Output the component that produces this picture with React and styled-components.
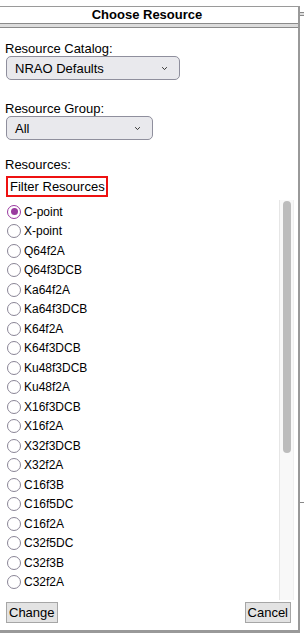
import React from "react";
import styled, { createGlobalStyle } from "styled-components";

const Global = createGlobalStyle`
  html, body { margin: 0; padding: 0; background: #fff; }
  body { font-family: "Liberation Sans", Arial, sans-serif; color: #000; }
`;

const Page = styled.div`
  display: flex;
  width: 304px;
  height: 635px;
  overflow: hidden;
`;

const Panel = styled.div`
  box-sizing: border-box;
  width: 300px;
  margin-top: 6px;
  height: 627px;
  border-top: 1px solid #9a9a9a;
  border-right: 2px solid #999;
  border-bottom: 3px solid #999;
  display: flex;
  flex-direction: column;
`;

const Edge = styled.div`
  width: 4px;
  display: flex;
  flex-direction: column;
`;

const EdgeBox = styled.div`
  margin-top: ${(p) => p.$top}px;
  height: ${(p) => p.$h}px;
  border-top: 1px solid #888;
  border-bottom: ${(p) => (p.$h > 0 ? "1px solid #888" : "none")};
  background: #ddd;
`;

const Header = styled.div`
  height: 16px;
  line-height: 16px;
  font-size: 13px;
  font-weight: bold;
  text-align: center;
  padding-right: 4px;
`;

const Divider = styled.div`
  height: 3px;
  border-top: 1px solid #8a8a8a;
  border-bottom: 1px solid #8a8a8a;
  background: #dcdcdc;
`;

const Body = styled.div`
  display: flex;
  flex-direction: column;
  flex: 1;
  padding-top: 13px;
`;

const Label = styled.div`
  font-size: 13px;
  line-height: 15px;
  height: 15px;
  padding-left: 5px;
  margin-top: ${(p) => p.$mt || 0}px;
`;

const SelectBox = styled.div`
  box-sizing: border-box;
  margin-left: 6px;
  width: ${(p) => p.$w}px;
  height: 24px;
  background: #e9e9ed;
  border: 1px solid #8f8f9d;
  border-radius: 5px;
  display: flex;
  align-items: center;
  justify-content: space-between;
  padding: 0 11px 0 8px;
  font-size: 13px;
`;

const Chevron = () => (
  <svg width="7" height="5" viewBox="0 0 7 5">
    <path d="M1.2 1.2 L3.5 3.6 L5.8 1.2" fill="none" stroke="#333" strokeWidth="1" />
  </svg>
);

const FilterBox = styled.div`
  box-sizing: border-box;
  margin: 4px 0 0 6px;
  width: 102px;
  height: 21px;
  border: 2px solid #ee1111;
  font-size: 13px;
  line-height: 17px;
  padding-left: 2px;
  white-space: nowrap;
`;

const ListArea = styled.div`
  display: flex;
  margin-top: 3px;
  width: 294px;
  height: 400px;
`;

const Items = styled.div`
  flex: 1;
  overflow: hidden;
  padding: 2px 0 0 7px;
`;

const Track = styled.div`
  box-sizing: border-box;
  width: 15px;
  height: 100%;
  background: #f8f8f8;
  border-left: 1px solid #e6e6e6;
  border-right: 1px solid #efefef;
  padding: 1px 2px 0 3px;
`;

const Thumb = styled.div`
  height: 252px;
  border-radius: 5px;
  background: #bcbcbc;
`;

const Row = styled.label`
  display: flex;
  align-items: center;
  gap: 3px;
  height: 19.5px;
  font-size: 12px;
  white-space: nowrap;
`;

const Radio = styled.span`
  box-sizing: border-box;
  width: 14px;
  height: 14px;
  border-radius: 50%;
  border: 1.5px solid ${(p) => (p.$on ? "#9a3a9f" : "#8a8596")};
  background: #fff;
  display: flex;
  align-items: center;
  justify-content: center;
  &::after {
    content: "";
    width: 7px;
    height: 7px;
    border-radius: 50%;
    background: ${(p) => (p.$on ? "#9a3a9f" : "transparent")};
  }
`;

const Buttons = styled.div`
  display: flex;
  justify-content: space-between;
  padding: 2px 7px 0 6px;
`;

const Button = styled.button`
  box-sizing: border-box;
  height: 21px;
  padding: 0 2px;
  background: #e3e3e3;
  border: 1px solid #a6a6a6;
  border-radius: 0;
  font-family: "Liberation Sans", Arial, sans-serif;
  font-size: 13px;
  color: #000;
`;

const items = [
  "C-point", "X-point", "Q64f2A", "Q64f3DCB", "Ka64f2A", "Ka64f3DCB",
  "K64f2A", "K64f3DCB", "Ku48f3DCB", "Ku48f2A", "X16f3DCB", "X16f2A",
  "X32f3DCB", "X32f2A", "C16f3B", "C16f5DC", "C16f2A", "C32f5DC",
  "C32f3B", "C32f2A",
];

export default function App() {
  return (
    <>
      <Global />
      <Page>
        <Panel>
          <Header>Choose Resource</Header>
          <Divider />
          <Body>
            <Label>Resource Catalog:</Label>
            <SelectBox $w={174}>
              <span>NRAO Defaults</span>
              <Chevron />
            </SelectBox>
            <Label $mt={21}>Resource Group:</Label>
            <SelectBox $w={147}>
              <span>All</span>
              <Chevron />
            </SelectBox>
            <Label $mt={17}>Resources:</Label>
            <FilterBox>Filter Resources</FilterBox>
            <ListArea>
              <Items>
                {items.map((it, i) => (
                  <Row key={it}>
                    <Radio $on={i === 0} />
                    {it}
                  </Row>
                ))}
              </Items>
              <Track>
                <Thumb />
              </Track>
            </ListArea>
            <Buttons>
              <Button>Change</Button>
              <Button>Cancel</Button>
            </Buttons>
          </Body>
        </Panel>
        <Edge>
          <EdgeBox $top={12} $h={2} />
          <EdgeBox $top={486} $h={0} />
        </Edge>
      </Page>
    </>
  );
}
